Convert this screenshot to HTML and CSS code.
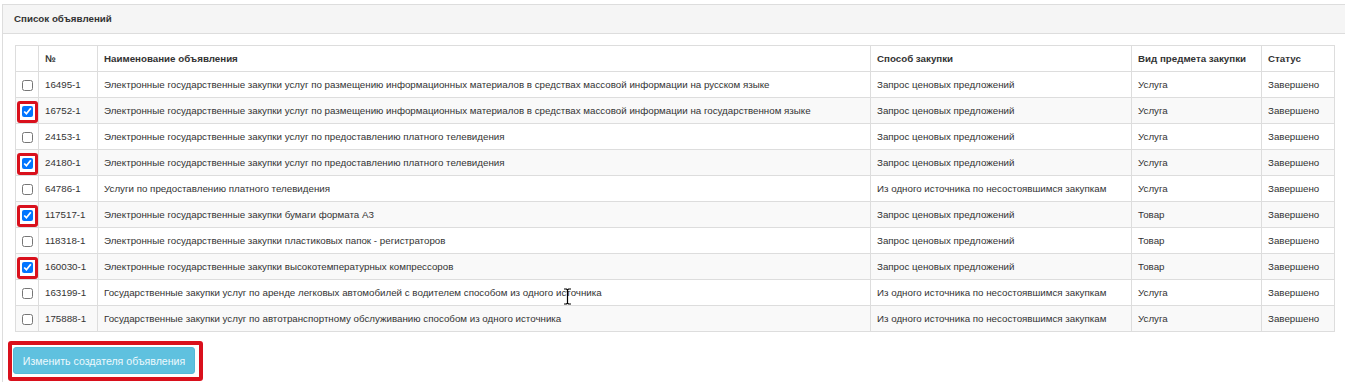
FILE: index.html
```html
<!DOCTYPE html>
<html lang="ru">
<head>
  <meta charset="UTF-8" />
  <title>Список объявлений</title>
  <link rel="stylesheet" href="styles.css">
</head>
<body>
  <div class="panel">
    <div class="panel-heading">Список объявлений</div>
    <div class="panel-body">
      <table class="adverts">
        <colgroup>
          <col class="c-check"><col class="c-num"><col class="c-name"><col class="c-method"><col class="c-kind"><col class="c-status">
        </colgroup>
        <thead>
          <tr><th></th><th>№</th><th>Наименование объявления</th><th>Способ закупки</th><th>Вид предмета закупки</th><th>Статус</th></tr>
        </thead>
        <tbody>
          <tr>
            <td class="check"><input type="checkbox"></td>
            <td>16495-1</td>
            <td>Электронные государственные закупки услуг по размещению информационных материалов в средствах массовой информации на русском языке</td>
            <td>Запрос ценовых предложений</td><td>Услуга</td><td>Завершено</td>
          </tr>
          <tr>
            <td class="check"><span class="mark"><input type="checkbox" checked></span></td>
            <td>16752-1</td>
            <td>Электронные государственные закупки услуг по размещению информационных материалов в средствах массовой информации на государственном языке</td>
            <td>Запрос ценовых предложений</td><td>Услуга</td><td>Завершено</td>
          </tr>
          <tr>
            <td class="check"><input type="checkbox"></td>
            <td>24153-1</td>
            <td>Электронные государственные закупки услуг по предоставлению платного телевидения</td>
            <td>Запрос ценовых предложений</td><td>Услуга</td><td>Завершено</td>
          </tr>
          <tr>
            <td class="check"><span class="mark"><input type="checkbox" checked></span></td>
            <td>24180-1</td>
            <td>Электронные государственные закупки услуг по предоставлению платного телевидения</td>
            <td>Запрос ценовых предложений</td><td>Услуга</td><td>Завершено</td>
          </tr>
          <tr>
            <td class="check"><input type="checkbox"></td>
            <td>64786-1</td>
            <td>Услуги по предоставлению платного телевидения</td>
            <td>Из одного источника по несостоявшимся закупкам</td><td>Услуга</td><td>Завершено</td>
          </tr>
          <tr>
            <td class="check"><span class="mark"><input type="checkbox" checked></span></td>
            <td>117517-1</td>
            <td>Электронные государственные закупки бумаги формата А3</td>
            <td>Запрос ценовых предложений</td><td>Товар</td><td>Завершено</td>
          </tr>
          <tr>
            <td class="check"><input type="checkbox"></td>
            <td>118318-1</td>
            <td>Электронные государственные закупки пластиковых папок - регистраторов</td>
            <td>Запрос ценовых предложений</td><td>Товар</td><td>Завершено</td>
          </tr>
          <tr>
            <td class="check"><span class="mark"><input type="checkbox" checked></span></td>
            <td>160030-1</td>
            <td>Электронные государственные закупки высокотемпературных компрессоров</td>
            <td>Запрос ценовых предложений</td><td>Товар</td><td>Завершено</td>
          </tr>
          <tr>
            <td class="check"><input type="checkbox"></td>
            <td>163199-1</td>
            <td>Государственные закупки услуг по аренде легковых автомобилей с водителем способом из одного источника</td>
            <td>Из одного источника по несостоявшимся закупкам</td><td>Услуга</td><td>Завершено</td>
          </tr>
          <tr>
            <td class="check"><input type="checkbox"></td>
            <td>175888-1</td>
            <td>Государственные закупки услуг по автотранспортному обслуживанию способом из одного источника</td>
            <td>Из одного источника по несостоявшимся закупкам</td><td>Услуга</td><td>Завершено</td>
          </tr>
        </tbody>
      </table>

      <span class="btn-mark"><button class="btn-info">Изменить создателя объявления</button></span>
    </div>
  </div>

  <!-- mouse cursor -->
  <svg class="ibeam" width="9" height="17" viewBox="0 0 9 17">
    <path d="M1 1h2.5l1 1 1-1H8M4.5 2v13M1 16h2.5l1-1 1 1H8" fill="none" stroke="#000" stroke-width="1.2"/>
  </svg>
</body>
</html>
```

FILE: styles.css
```css
body {
  margin: 0;
  font-family: "Liberation Sans", Arial, sans-serif;
  font-size: 9.75px;
  color: #333;
  background-color: white;
  overflow: hidden;
}
.panel {
  margin: 4px -10px 0 2px;
  border: 1px solid #ddd;
  border-bottom: none;
  height: 378px;
  box-sizing: border-box;
}
.panel-heading {
  background-color: #f5f5f5;
  border-bottom: 1px solid #ddd;
  padding: 0 11px;
  height: 28px;
  line-height: 28px;
  font-weight: bold;
}
.panel-body {
  padding: 11px 0 0 12px;
}
.adverts {
  width: 1319px;
  border-collapse: collapse;
  table-layout: fixed;
}
.c-check { width: 23px; }
.c-num { width: 59px; }
.c-name { width: 773px; }
.c-method { width: 261px; }
.c-kind { width: 130px; }
.c-status { width: 73px; }
.adverts th, .adverts td {
  border: 1px solid #ddd;
  padding: 6px 6px;
  line-height: 13px;
  text-align: left;
  vertical-align: middle;
  white-space: nowrap;
  overflow: hidden;
}
.adverts th {
  font-weight: bold;
}
.adverts tbody tr:nth-child(even) {
  background-color: #f9f9f9;
}
.adverts td.check {
  padding: 0;
  text-align: center;
}
.check input {
  width: 11px;
  height: 11px;
  margin: 0;
  vertical-align: middle;
}
.mark {
  display: inline-block;
  border: 3px solid #d9101c;
  border-radius: 3px;
  padding: 2px 2px 3px;
  margin: -7px 0;
  line-height: 0;
  background-color: white;
}
.btn-mark {
  display: inline-block;
  margin: 9px 0 0 -7px;
  border: 4px solid #d9101c;
  border-radius: 3px;
  padding: 2px 4px 3px 1px;
  line-height: 0;
}
.btn-info {
  font-family: inherit;
  font-size: 10.6px;
  color: #eef9fd;
  background-color: #5fc1df;
  border: 1px solid #55b9d8;
  border-radius: 3px;
  width: 182px;
  height: 27px;
  padding: 0;
  cursor: pointer;
}
.ibeam {
  position: absolute;
  left: 563px;
  top: 288px;
}
```
